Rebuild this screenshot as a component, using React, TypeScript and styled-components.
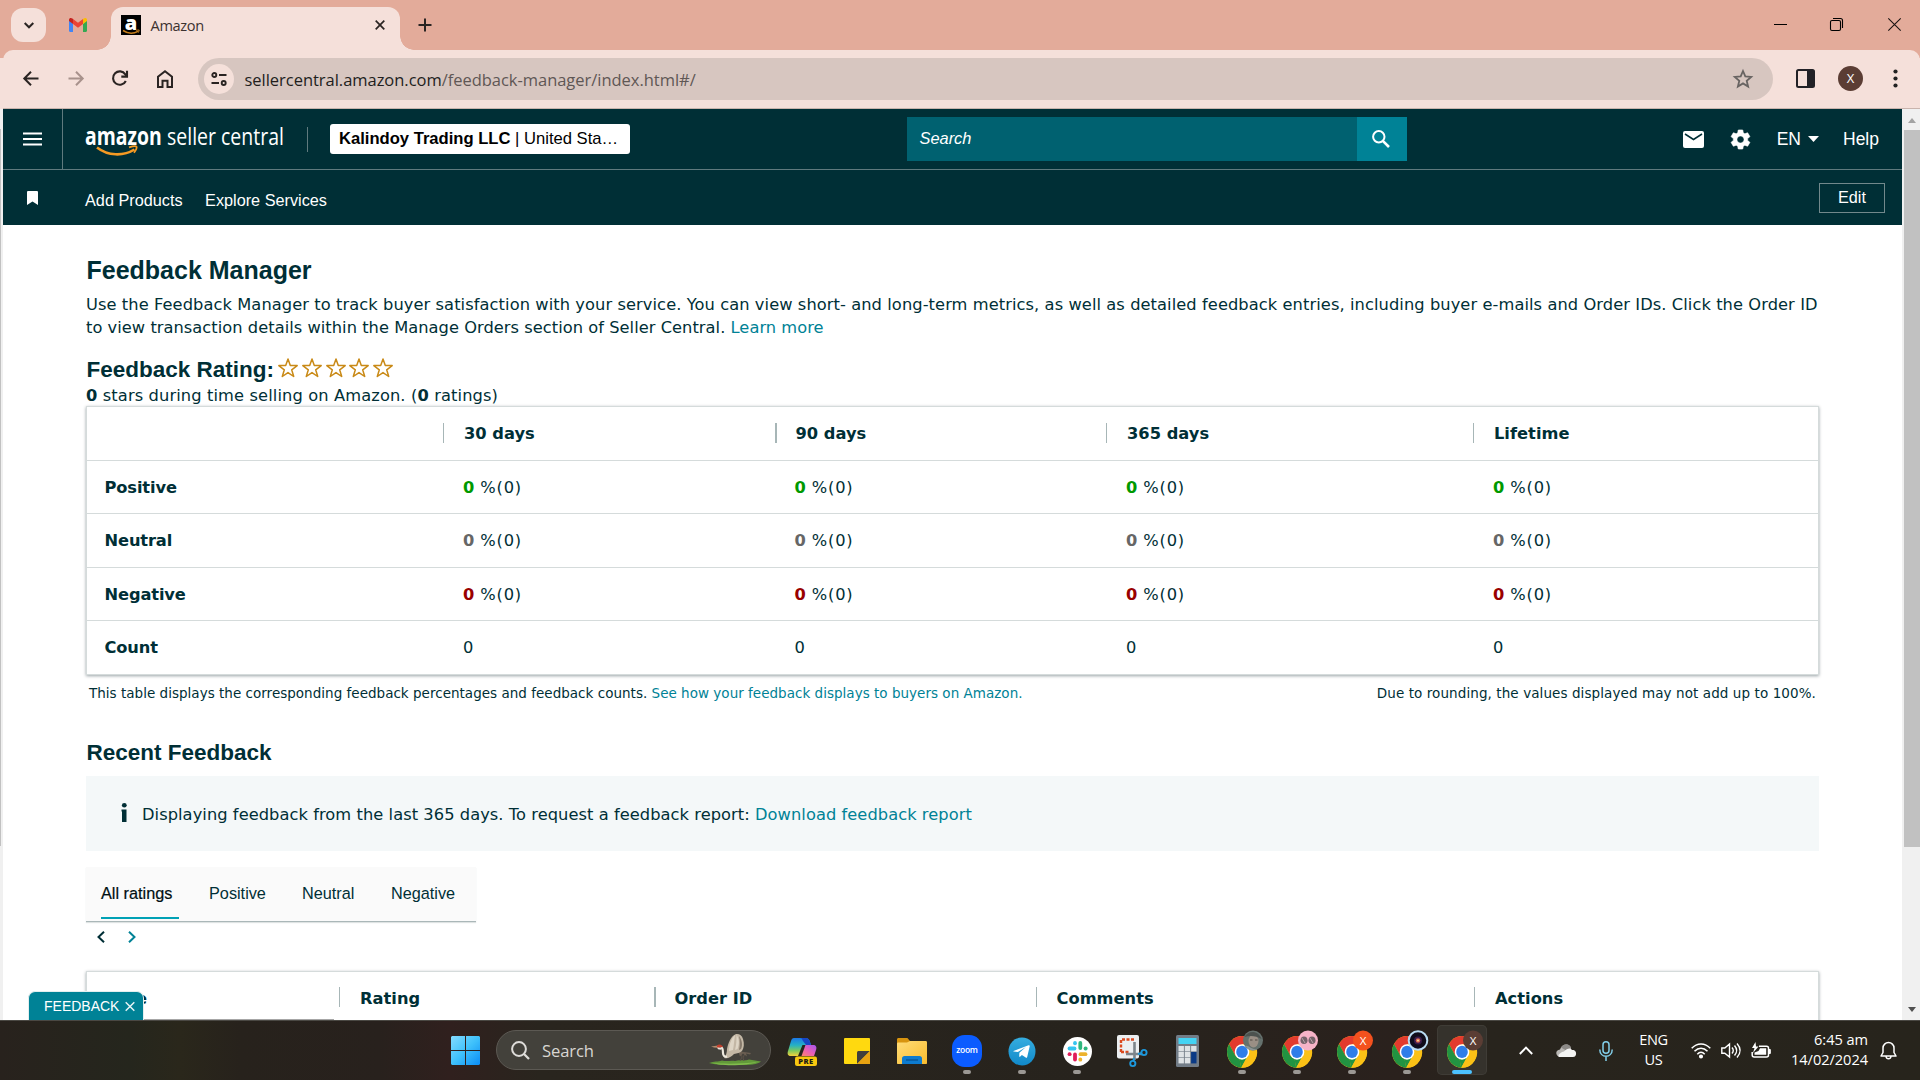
import React from "react";
import styled, { createGlobalStyle, css } from "styled-components";

const ui = '"Open Sans", "Noto Sans", sans-serif';
const arial = '"Liberation Sans", Arial, sans-serif';
const verdana = '"DejaVu Sans", Verdana, sans-serif';
const ink = "#002f36";
const teal = "#008296";

const GlobalStyle = createGlobalStyle`
  *, *::before, *::after { box-sizing: border-box; }
  html, body { margin: 0; padding: 0; overflow: hidden; }
  body { background: #fff; color: ${ink}; font-family: ${verdana}; }
  svg { display: block; flex: none; overflow: visible; }
`;

const Screen = styled.div`
  display: grid;
  grid-template-rows: 50px 59px 911px 60px;
  width: 1920px;
  height: 1080px;
  overflow: hidden;
`;

/* ---------- Browser tab strip ---------- */
const TabStrip = styled.header`
  display: flex;
  align-items: flex-start;
  background: #e3ab9a;
`;
const TabSearchButton = styled.div`
  display: flex;
  align-items: center;
  justify-content: center;
  width: 35px;
  height: 34px;
  margin: 8px 0 0 11px;
  border-radius: 12px;
  background: #f5e0da;
`;
const PinnedTab = styled.div`
  display: flex;
  align-items: center;
  height: 50px;
  margin: 0 0 0 23px;
`;
const ActiveTab = styled.div`
  position: relative;
  display: flex;
  align-items: center;
  width: 289px;
  height: 43px;
  margin: 7px 0 0 24px;
  padding: 0 14px 7px 10px;
  border-radius: 12px 12px 0 0;
  background: #f5e0da;
  &::before, &::after {
    content: "";
    position: absolute;
    bottom: 0;
    width: 14px;
    height: 14px;
  }
  &::before { left: -14px; background: radial-gradient(circle at 0 0, transparent 13.5px, #f5e0da 14px); }
  &::after { right: -14px; background: radial-gradient(circle at 100% 0, transparent 13.5px, #f5e0da 14px); }
`;
const TabTitle = styled.span`
  flex: 1;
  margin-left: 9.5px;
  font: 14.6px/20px ${ui};
  letter-spacing: -0.35px;
  color: #3c3230;
`;
const NewTab = styled.div`
  display: flex;
  align-items: center;
  height: 50px;
  margin-left: 18px;
`;
const WindowControls = styled.div`
  display: flex;
  align-items: center;
  gap: 44px;
  height: 49px;
  margin-left: auto;
  padding-right: 19px;
`;

/* ---------- Browser toolbar ---------- */
const Toolbar = styled.div`
  display: flex;
  align-items: center;
  height: 59px;
  margin-left: 3px;
  padding: 0 19px 1px 20px;
  border-bottom: 1px solid #c9b4ad;
  background: #f5e0da;
  border-radius: 10px 10px 0 0;
`;
const ToolbarBacking = styled.div`
  background: linear-gradient(#e3ab9a 8px, #f5e0da 8px);
`;
const NavIcons = styled.div`
  display: flex;
  align-items: center;
  gap: 28.7px;
  width: 175px;
`;
const Omnibox = styled.div`
  display: flex;
  align-items: center;
  width: 1575px;
  height: 42px;
  padding: 0 20px 0 6px;
  border-radius: 21px;
  background: #d7c6c0;
`;
const SiteInfo = styled.div`
  display: flex;
  align-items: center;
  justify-content: center;
  width: 30px;
  height: 30px;
  border-radius: 50%;
  background: #f5e0da;
`;
const Url = styled.span`
  flex: 1;
  margin: 2px 0 0 10.5px;
  font: 16.5px/24px ${ui};
  letter-spacing: -0.03px;
  color: #5f5755;
  b { font-weight: 400; color: #221e1d; }
`;
const Profile = styled.div`
  display: flex;
  align-items: center;
  justify-content: center;
  width: 25px;
  height: 25px;
  margin: 0 30px 0 23px;
  border-radius: 50%;
  background: #5b3d34;
  color: #fff;
  font: 13px/25px ${ui};
`;

/* ---------- Page viewport ---------- */
const Viewport = styled.div`
  display: grid;
  grid-template-columns: 3px 1899px 18px;
  height: 911px;
`;
const LeftEdge = styled.div`
  background: #f0f0f0;
  &::before {
    content: "";
    display: block;
    width: 1px;
    height: 717px;
    margin-top: 20px;
    background: #c1c1c1;
  }
`;
const Page = styled.div`
  position: relative;
  height: 911px;
  overflow: hidden;
  background: #fff;
`;
const Scrollbar = styled.div`
  display: flex;
  flex-direction: column;
  justify-content: space-between;
  height: 911px;
  padding-left: 2px;
  background: #f0f0f0;
`;
const ScrollArrow = styled.div<{ $down?: boolean }>`
  width: 0;
  height: 0;
  margin: ${(p) => (p.$down ? "auto 0 8px 4px" : "9px 0 7px 4px")};
  border: 4.5px solid transparent;
  ${(p) => (p.$down ? css`border-top: 5px solid #505050; border-bottom: 0;` : css`border-bottom: 5px solid #a3a3a3; border-top: 0;`)}
`;
const ScrollThumb = styled.div`
  height: 717px;
  background: #c1c1c1;
`;

/* ---------- Seller Central header ---------- */
const SiteHeader = styled.div`
  display: flex;
  align-items: center;
  height: 61px;
  border-bottom: 1px solid #5f7a7e;
  background: ${ink};
`;
const MenuButton = styled.div`
  display: flex;
  align-items: center;
  width: 60px;
  height: 60px;
  padding-left: 20px;
  border-right: 1px solid #5f7a7e;
`;
const Logo = styled.div`
  position: relative;
  display: flex;
  width: 221px;
  height: 36px;
  margin-left: 22px;
  color: #fff;
  white-space: nowrap;
  svg { position: absolute; left: 12px; top: 25px; }
`;
const Wordmark = styled.span<{ $bold?: boolean }>`
  width: ${(p) => (p.$bold ? 82 : 120)}px;
  font: ${(p) => (p.$bold ? "700 25px" : "400 24px")}/29px ${ui};
  transform: scaleX(${(p) => (p.$bold ? 0.775 : 0.812)});
  transform-origin: 0 50%;
`;
const HeaderRule = styled.div`
  width: 1px;
  height: 25px;
  margin-left: 1px;
  background: #5f7a7e;
`;
const AccountBox = styled.div`
  width: 300px;
  height: 30px;
  margin: 0 0 1px 22px;
  padding-left: 9px;
  border-radius: 3px;
  background: #fff;
  color: #000;
  font: 16.6px/29px ${arial};
  white-space: nowrap;
`;
const SearchBox = styled.div`
  display: flex;
  width: 500px;
  height: 44px;
  margin-left: 277px;
`;
const SearchInput = styled.div`
  flex: 1;
  padding-left: 12.5px;
  background: #006170;
  color: #fff;
  font: italic 16.4px/43px ${arial};
`;
const SearchButton = styled.div`
  display: flex;
  align-items: center;
  justify-content: center;
  width: 50px;
  padding-right: 2px;
  background: ${teal};
`;
const HeaderTools = styled.div`
  display: flex;
  align-items: center;
  margin-left: auto;
  padding-right: 23px;
  color: #fff;
  font: 17.5px/20px ${arial};
`;
const Language = styled.span`
  display: flex;
  align-items: center;
  gap: 7px;
  margin: 0 24px 0 25px;
`;
const SubNav = styled.div`
  display: flex;
  align-items: center;
  height: 55px;
  padding: 0 17px 0 24px;
  background: ${ink};
  color: #fff;
  font: 16.25px/20px ${arial};
`;
const SubNavLinks = styled.div`
  display: flex;
  gap: 22.5px;
  margin: 5px auto 0 47px;
`;
const EditButton = styled.div`
  width: 66px;
  height: 30px;
  margin-top: 1px;
  border: 1px solid #72898c;
  text-align: center;
  line-height: 27px;
`;

/* ---------- Page content ---------- */
const Content = styled.main`
  width: 1733px;
  margin-left: 83px;
  padding-top: 30px;
  font: 16.25px/23px ${verdana};
`;
const Title = styled.h1`
  margin: 0 0 8px 0.5px;
  font: bold 25px/30px ${arial};
`;
const Intro = styled.p`
  margin: 0 0 16px;
  letter-spacing: 0.08px;
  white-space: nowrap;
`;
const IntroTail = styled.span`letter-spacing: 0.04px;`;
const Link = styled.a`color: ${teal};`;
const SectionTitle = styled.h2`
  display: flex;
  margin: 0 0 0 0.5px;
  font: bold 22.5px/30px ${arial};
`;
const Stars = styled.span`
  display: flex;
  gap: 3.8px;
  margin: 3px 0 0 4px;
`;
const Summary = styled.div`
  height: 21px;
  line-height: 22px;
  letter-spacing: 0.12px;
`;
const Table = styled.div`
  border: 1px solid #d5dbdb;
  background: #fff;
  box-shadow: 0 1px 3px rgba(0, 28, 36, 0.4);
`;
const TableRow = styled.div<{ $height: number; $columns: string }>`
  display: grid;
  grid-template-columns: ${(p) => p.$columns};
  height: ${(p) => p.$height}px;
  line-height: ${(p) => p.$height}px;
  border-bottom: 1px solid #d5dbdb;
  &:last-child { border-bottom: 0; }
`;
const HeadCell = styled.div<{ $indent?: number; $thick?: boolean }>`
  display: flex;
  align-items: center;
  padding-left: ${(p) => p.$indent ?? 0}px;
  font-weight: 700;
  letter-spacing: 0.02px;
  ${(p) => p.$indent === undefined && css`
    &::before {
      content: "";
      width: ${p.$thick ? 2 : 1}px;
      height: 20px;
      margin-right: ${p.$thick ? 19 : 20}px;
      margin-bottom: 3px;
      background: #a7b6b7;
    }
  `}
`;
const LabelCell = styled.div`
  padding-left: 17.5px;
  font-weight: 700;
  letter-spacing: -0.12px;
`;
const ValueCell = styled.div`
  padding-left: 20px;
  letter-spacing: 0.8px;
`;
const Percent = styled.b<{ $color: string }>`
  color: ${(p) => p.$color};
  letter-spacing: 0;
`;
const Notes = styled.div`
  display: flex;
  justify-content: space-between;
  margin: 8px 2px 35px 3px;
  padding-right: 1px;
  font-size: 13.5px;
  line-height: 20px;
  letter-spacing: 0.02px;
  > span:last-child { letter-spacing: 0.09px; }
`;
const Alert = styled.div`
  display: flex;
  align-items: center;
  height: 75px;
  margin: 8px 0 16px;
  padding: 1px 0 0 34.5px;
  background: #f4f8f9;
  letter-spacing: 0.06px;
  svg { margin-right: 15.5px; margin-bottom: 4px; }
`;
const Tabs = styled.div`
  display: flex;
  width: 390px;
  height: 55px;
  padding-left: 15px;
  border-bottom: 1px solid #aab7b8;
  background: #fafafa;
  box-shadow: 0 1px 1px #dfe3e3;
  font: 16.25px/53px ${arial};
`;
const Tab = styled.div<{ $active?: boolean; $width: number }>`
  width: ${(p) => p.$width}px;
  height: 52px;
  ${(p) => p.$active && css`color: #000f12; border-bottom: 2px solid #00a1b5; -webkit-text-stroke: 0.2px #000f12;`}
`;
const Pager = styled.div`
  display: flex;
  align-items: center;
  gap: 23px;
  height: 30px;
  margin-bottom: 19px;
  padding-left: 11px;
`;
const FeedbackTab = styled.div`
  position: absolute;
  left: 25px;
  bottom: 0;
  display: flex;
  align-items: center;
  width: 116px;
  height: 29px;
  padding: 0 8px 0 15px;
  border: 1px solid #e4eeee;
  border-bottom: 0;
  border-radius: 7px 7px 0 0;
  background: ${teal};
  color: #fff;
  font: 14px/28px ${arial};
  justify-content: space-between;
`;
const StatusEdge = styled.div`
  position: absolute;
  left: 49px;
  bottom: 0;
  width: 282px;
  height: 1px;
  background: #a6a6a6;
`;

/* ---------- Taskbar ---------- */
const Taskbar = styled.footer`
  display: flex;
  height: 60px;
  border-top: 1px solid #4a4843;
  background: linear-gradient(90deg, #28221d 0, #25261d 130px, #2a271b 180px, #27221c 240px, #28211d 380px, #30201e 450px, #29251e 540px, #27231d 1100px, #2a211d 1400px, #28241d 1480px, #27241c 100%);
  color: #fff;
`;
const StartButton = styled.div`margin: 15px 16px 0 451px;`;
const TaskSearch = styled.div`
  display: flex;
  align-items: center;
  width: 275px;
  height: 40px;
  margin: 9px 3.5px 0 0;
  padding: 0 9px 0 14px;
  border: 1px solid #5c5953;
  border-radius: 20px;
  background: #43413b;
  color: #d8d6d2;
  font: 16.6px/24px ${ui};
  letter-spacing: -0.1px;
  span { flex: 1; margin: 1px 0 0 12px; }
`;
const Slot = styled.div<{ $active?: boolean }>`
  display: flex;
  flex-direction: column;
  align-items: center;
  width: 50px;
  height: 50px;
  margin: 4px 2.5px 0;
  padding-top: 10px;
  border-radius: 5px;
  ${(p) => p.$active && css`background: #35322c; box-shadow: inset 0 0 0 1px #3f3c36;`}
`;
const Indicator = styled.i<{ $active?: boolean }>`
  width: ${(p) => (p.$active ? 20 : 8)}px;
  height: 4px;
  margin-top: 4px;
  border-radius: 2px;
  background: ${(p) => (p.$active ? "#4cc2ff" : "#9b9894")};
`;
const Tray = styled.div`
  display: flex;
  align-items: center;
  margin-left: auto;
  padding-right: 23px;
`;
const TrayText = styled.div<{ $align: string; $width: number; $ls: number }>`
  width: ${(p) => p.$width}px;
  margin-bottom: 3px;
  text-align: ${(p) => p.$align};
  font: 14.6px/20px ${ui};
  letter-spacing: ${(p) => p.$ls}px;
  white-space: nowrap;
`;
const Gap = styled.i<{ $width: number }>`width: ${(p) => p.$width}px;`;

/* ---------- Data ---------- */
const ratingColumns = "356px 331.500px 331.500px 367px 1fr";
const feedbackColumns = "252px 314.500px 382px 438.500px 1fr";
const periods = ["30 days", "90 days", "365 days", "Lifetime"];
const ratings = [
  { label: "Positive", color: "#009900", height: 53 },
  { label: "Neutral", color: "#666666", height: 54 },
  { label: "Negative", color: "#990000", height: 53 },
];

/* ---------- Icons ---------- */
const GmailIcon = () => (
  <svg width="18" height="14" viewBox="0 0 18 14">
    <path d="M0 2v10.800c0 .7.5 1.200 1.200 1.200H4V6z" fill="#4285f4" />
    <path d="M14 6v8h2.800c.7 0 1.200-.5 1.200-1.200V2z" fill="#34a853" />
    <path d="M14 1.200V6l4-3V1.800C18 0 16-.6 14.600.5z" fill="#fbbc04" />
    <path d="M4 6V1l5 3.800L14 1v5L9 9.800z" fill="#ea4335" />
    <path d="M0 1.800V3l4 3V1.100L3.400.5C2-.6 0 0 0 1.800z" fill="#c5221f" />
  </svg>
);

const AmazonFavicon = () => (
  <svg width="20" height="20" viewBox="0 0 20 20">
    <rect width="20" height="20" fill="#000" />
    <text x="10" y="14.500" textAnchor="middle" fontFamily="Open Sans" fontWeight="800" fontSize="20" fill="#fff">a</text>
    <path d="M2 15.500c5 3.300 10.500 3.300 15 .8" stroke="#c77f1c" strokeWidth="1.500" fill="none" />
    <path d="M15 15.200l3.200-.2-.7 2.600" stroke="#c77f1c" strokeWidth="1" fill="none" />
  </svg>
);

const StarIcon = () => (
  <svg width="20" height="20" viewBox="0 0 20 20">
    <path d="M10 1l2.300 6.400 6.900.2-5.500 4.200 2 6.700L10 14.600l-5.700 3.900 2-6.700L.8 7.600l6.900-.2z" fill="#fff" stroke="#c98a17" strokeWidth="1.500" strokeLinejoin="round" />
  </svg>
);

const GearIcon = () => (
  <svg width="23" height="23" viewBox="0 0 24 24" fill="#fff">
    <path d="M19.430 12.980c.04-.32.07-.64.07-.98s-.03-.66-.07-.98l2.110-1.650c.19-.15.24-.42.120-.64l-2-3.460c-.12-.22-.39-.3-.61-.22l-2.490 1c-.52-.4-1.080-.73-1.690-.98l-.38-2.650A.488.488 0 0 0 14 2h-4c-.25 0-.46.180-.49.420l-.38 2.650c-.61.250-1.170.590-1.690.980l-2.490-1c-.23-.09-.49 0-.61.220l-2 3.460c-.13.220-.07.490.120.640l2.110 1.650c-.04.320-.07.650-.07.980s.03.660.07.980l-2.110 1.650c-.19.150-.24.420-.12.640l2 3.460c.12.220.39.300.61.220l2.490-1c.52.400 1.080.730 1.690.980l.38 2.650c.03.240.24.420.49.420h4c.25 0 .46-.18.49-.42l.38-2.650c.61-.25 1.170-.59 1.690-.98l2.490 1c.23.090.49 0 .61-.22l2-3.460c.12-.22.07-.49-.12-.64l-2.110-1.650zM12 15.700c-2.040 0-3.700-1.660-3.700-3.700s1.660-3.700 3.700-3.700 3.700 1.660 3.700 3.700-1.660 3.700-3.700 3.700z" stroke="#fff" strokeWidth=".6" />
  </svg>
);

const WindowsIcon = () => (
  <svg width="29" height="29" viewBox="0 0 29 29">
    <defs>
      <linearGradient id="win" x1="0" y1="0" x2="1" y2="1" gradientUnits="objectBoundingBox">
        <stop offset="0" stopColor="#84dcff" /><stop offset=".5" stopColor="#3fc1fb" /><stop offset="1" stopColor="#0a8cf5" />
      </linearGradient>
    </defs>
    <path d="M1 0h13v14H0V1zM15 0h13l1 1v13H15zM0 15h14v14H1l-1-1zM15 15h14v13l-1 1H15z" fill="url(#win)" />
  </svg>
);

const CraneArt = () => (
  <svg width="52" height="32" viewBox="0 0 52 32">
    <path d="M0 29c5-2 9-1 13-2.500 5 1.500 8-.5 13 .5 6-1.500 10 0 14-1.500 4 1 8 1 12 2-3 3-12 3.500-22 3.500C17 31 8 31 0 29z" fill="#62993a" />
    <path d="M4 29c10 1 30 1 44-1-6 3-34 5-44 1z" fill="#82bd4d" />
    <path d="M32 19l1 4-2 4M36 19l-2 5 1 3" stroke="#5d5247" strokeWidth="1" fill="none" />
    <path d="M28 17l14 2-1 1.500-4-1 1 3-4-3-3 3-1-3z" fill="#6a5e51" />
    <path d="M15 24c2-2 3-6 3-9 1-6 4-13 9-15 3-.5 6 1 7 5 1.500 5 1 9-1 12-2 2-5 2-8 3-3 3-6 5-10 4z" fill="#c3b7a5" />
    <path d="M20 17c0-6 2-12 6-16-1 6-1 10-2 15zM26 16c1.500-6 1.500-10 1.500-15 3 4 3 9 1 14z" fill="#ded5c5" />
    <path d="M30 16c1-5 1-9 0-14 3 4 4 9 2 13z" fill="#867a6c" />
    <path d="M12 13c2 1 2 4 2 6 0 3 2 4 4 3.500" stroke="#eee9df" strokeWidth="2.200" fill="none" />
    <path d="M2 12.500l7-1 1 2.500-5-.5z" fill="#b28b6d" />
    <path d="M8 11.500c2-2 5-1 6 1.500l-6 1z" fill="#c5402d" />
    <path d="M8 13.500l5 .2-1 2-3-.5z" fill="#e9e3da" />
  </svg>
);

const CopilotIcon = () => (
  <svg width="30" height="30" viewBox="0 0 30 30">
    <defs>
      <linearGradient id="cpa" x1="0" y1="0" x2="0" y2="1"><stop offset="0" stopColor="#1c78e8" /><stop offset=".4" stopColor="#25b1c4" /><stop offset=".7" stopColor="#7bc95f" /><stop offset="1" stopColor="#f4d13a" /></linearGradient>
      <linearGradient id="cpb" x1="1" y1="0" x2="0" y2="1"><stop offset="0" stopColor="#a455f0" /><stop offset=".5" stopColor="#ea5fb5" /><stop offset="1" stopColor="#ff8a62" /></linearGradient>
    </defs>
    <path d="M7 2h12c2 0 3 1 4 4l1 3h-5c-2 0-3 1-4 3l-3 8H4c-3 0-4-2-3-5L4 5c.600-2 1.500-3 3-3z" fill="url(#cpa)" />
    <path d="M13 2h6c2 0 3 1 4 4l1 3h-5l-3-4c-1-2-1-3-3-3z" fill="#1746c4" />
    <path d="M19 9h7c3 0 4 2 3 5l-2 6H12l4-9c.600-1.400 1.500-2 3-2z" fill="url(#cpb)" />
    <path d="M15.500 9h3l-4 11h-3.500z" fill="#26251f" />
    <rect x="8" y="20.500" width="22" height="9.500" rx="2" fill="#f8c810" />
    <text x="19" y="28" textAnchor="middle" fontFamily="Open Sans" fontWeight="800" fontSize="7.500" letterSpacing=".5" fill="#1b1a16">PRE</text>
  </svg>
);

const StickyNoteIcon = () => (
  <svg width="26" height="30" viewBox="0 0 26 30">
    <rect y="2" width="26" height="26" rx="1" fill="#ffd90f" />
    <path d="M13 17c0-1.500.500-2 2-2h11L13 28z" fill="#413f3c" />
    <path d="M26 15v12a1 1 0 0 1-1 1H13z" fill="#e8a311" />
  </svg>
);

const FolderIcon = () => (
  <svg width="30" height="30" viewBox="0 0 30 30">
    <defs><linearGradient id="fld" x1="0" y1="0" x2="1" y2="1"><stop offset="0" stopColor="#ffdc78" /><stop offset="1" stopColor="#f9bc2e" /></linearGradient></defs>
    <path d="M0 3.500C0 2.500.700 2 1.500 2h8c1 0 1.500.500 2 1.200L13 5v5H0z" fill="#d8940f" />
    <path d="M0 8c0-1.300.500-1.600 1.500-1.600H10L13 5h15.500c1 0 1.500.500 1.500 1.500V27c0 .700-.400 1-1 1H1c-.600 0-1-.300-1-1z" fill="url(#fld)" />
    <path d="M5 28v-5.500c0-1.500 1-2.500 2.500-2.500h15c1.500 0 2.500 1 2.500 2.500V28z" fill="#0d7bcf" />
    <path d="M9 24h12" stroke="#06508d" strokeWidth="1.200" />
  </svg>
);

const ZoomIcon = () => (
  <svg width="30" height="32" viewBox="0 0 30 32">
    <rect width="30" height="32" rx="12.500" fill="#0b5cff" />
    <text x="15" y="18.300" textAnchor="middle" fontFamily="Open Sans" fontWeight="600" fontSize="8.500" letterSpacing="-.3" fill="#fff">zoom</text>
  </svg>
);

const TelegramIcon = () => (
  <svg width="28" height="30" viewBox="0 0 28 30">
    <defs><linearGradient id="tg" x1="0" y1="0" x2="0" y2="1"><stop offset="0" stopColor="#35ade0" /><stop offset="1" stopColor="#1189c9" /></linearGradient></defs>
    <ellipse cx="14" cy="15.500" rx="13.500" ry="14" fill="url(#tg)" />
    <path d="M5.500 15L20.600 9.300c.8-.3 1.300.2 1.100 1L19.200 21c-.2.900-.800 1-1.500.600l-3.800-2.700-1.900 1.800c-.3.300-.800.200-.800-.300l.200-3.700 6.500-5.700-8 5-4.300-.500c-.600-.200-.600-.300-.1-.5z" fill="#fff" />
  </svg>
);

const SlackIcon = () => (
  <svg width="29" height="30" viewBox="0 0 29 30">
    <ellipse cx="14.500" cy="15.500" rx="14.500" ry="14.500" fill="#fff" />
    <g strokeWidth="3.800" strokeLinecap="round" fill="none">
      <path d="M6.500 12.500h5" stroke="#36c5f0" /><path d="M12 7v.3" stroke="#36c5f0" />
      <path d="M17.300 7v5" stroke="#2eb67d" /><path d="M22.500 12.500h.2" stroke="#2eb67d" />
      <path d="M17.500 18.200h5" stroke="#ecb22e" /><path d="M17.300 23.500v.2" stroke="#ecb22e" />
      <path d="M12 18.500v5" stroke="#e01e5a" /><path d="M6.500 18.200h.2" stroke="#e01e5a" />
    </g>
  </svg>
);

const SnipIcon = () => (
  <svg width="30" height="32" viewBox="0 0 30 32">
    <rect width="22" height="23.500" rx="2" fill="#eceff1" />
    <path d="M4 17V4.500h13" fill="none" stroke="#dc4a1f" strokeWidth="2.400" strokeDasharray="3 1.500" />
    <path d="M4 17h9" stroke="#dc4a1f" strokeWidth="2.400" strokeDasharray="3 1.500" />
    <path d="M17.500 7v18M9 19h16" stroke="#7d858b" strokeWidth="2.600" />
    <circle cx="27" cy="17.500" r="2.600" fill="none" stroke="#1d98dc" strokeWidth="1.900" />
    <circle cx="15.800" cy="28.500" r="2.600" fill="none" stroke="#1d98dc" strokeWidth="1.900" />
    <path d="M21 19l4-1M17 23l-.5 3" stroke="#1d98dc" strokeWidth="2" />
  </svg>
);

const CalculatorIcon = () => (
  <svg width="23" height="32" viewBox="0 0 23 32">
    <rect width="23" height="32" rx="1.500" fill="#727c87" />
    <rect x="2.500" y="3" width="18" height="6" fill="#44d3f4" />
    <g fill="#dfe3e6">
      {[11, 17, 23].map((y) => [2.5, 8.8].map((x) => <rect key={`${x}-${y}`} x={x} y={y} width="5.400" height="5.400" />))}
      <rect x="15.100" y="11" width="5.400" height="5.400" />
    </g>
    <rect x="15.100" y="17" width="5.400" height="11.400" fill="#0b3a85" />
  </svg>
);

const badges = {
  photo: <><circle cx="26" cy="4.500" r="10" fill="#65716d" /><ellipse cx="26.500" cy="5" rx="5" ry="6.500" fill="#9a8f85" /><path d="M17.500 1c4-7 14-7 17 2-5-3-11-4-17-2z" fill="#4c524f" /><path d="M23 4h2.500M28 4h2.500" stroke="#514a45" /><path d="M18 10c4-1 6 4 12 3-4 3-9 1-12-3z" fill="#8c9594" /></>,
  pink: <><circle cx="26" cy="4.500" r="10" fill="#f6b3c8" /><ellipse cx="22" cy="4.300" rx="3.500" ry="3.800" fill="#75626a" /><ellipse cx="30" cy="4.300" rx="3.500" ry="3.800" fill="#75626a" /><path d="M20 2l3 5M28 2l3 5" stroke="#b8a2a8" /></>,
  orange: <><circle cx="26" cy="4.500" r="10" fill="#f4511e" /><text x="26" y="8.700" textAnchor="middle" fontFamily="Open Sans" fontSize="11.500" fill="#fff">X</text></>,
  lens: <><circle cx="26" cy="4.500" r="9.300" fill="#100d1c" stroke="#b9dcf3" strokeWidth="2" /><circle cx="26" cy="4.500" r="4" fill="#3b1d4d" /><circle cx="26" cy="4.500" r="2.300" fill="#d7654d" /><circle cx="26" cy="4.500" r="1" fill="#f6dd9b" /></>,
  brown: <><circle cx="26" cy="4.500" r="10" fill="#5b3d34" /><text x="26" y="8.700" textAnchor="middle" fontFamily="Open Sans" fontSize="11.500" fill="#fff">X</text></>,
};

const ChromeIcon = ({ badge }: { badge: keyof typeof badges }) => (
  <svg width="30" height="30" viewBox="0 0 30 30">
    <g transform="scale(1 1.060)">
      <circle cx="15" cy="15" r="15" fill="#fbc116" />
      <path d="M15 15L2 7.500A15 15 0 0 1 28 7.500H15z" fill="#e33b2e" />
      <path d="M2 7.500l6.500 11.300L15 15V7.500z" fill="#e33b2e" />
      <path d="M2 7.500l6.500 11.300 4 2.500 1.700 8.700A15 15 0 0 1 2 7.500z" fill="#229342" />
      <path d="M12 20l9-2-6.800 12z" fill="#229342" />
      <path d="M14.200 30l7.300-12L15 8h13.300A15 15 0 0 1 14.200 30z" fill="#fbc116" />
      <circle cx="15" cy="15" r="7.300" fill="#fff" />
      <circle cx="15" cy="15" r="5.800" fill="#2f7de9" />
    </g>
    {badges[badge]}
  </svg>
);

const taskApps: { icon: React.ReactNode; running?: boolean; active?: boolean }[] = [
  { icon: <CopilotIcon /> },
  { icon: <StickyNoteIcon /> },
  { icon: <FolderIcon /> },
  { icon: <ZoomIcon />, running: true },
  { icon: <TelegramIcon />, running: true },
  { icon: <SlackIcon />, running: true },
  { icon: <SnipIcon /> },
  { icon: <CalculatorIcon /> },
  { icon: <ChromeIcon badge="photo" />, running: true },
  { icon: <ChromeIcon badge="pink" />, running: true },
  { icon: <ChromeIcon badge="orange" />, running: true },
  { icon: <ChromeIcon badge="lens" />, running: true },
  { icon: <ChromeIcon badge="brown" />, running: true, active: true },
];
const IconBox = styled.div`
  display: flex;
  align-items: center;
  height: 31px;
`;

/* ---------- Sections ---------- */
const Stroke = ({ w, h, d, c = "#2a2422", s = 2 }: { w: number; h: number; d: string; c?: string; s?: number }) => (
  <svg width={w} height={h} viewBox={`0 0 ${w} ${h}`}><path d={d} fill="none" stroke={c} strokeWidth={s} /></svg>
);

const BrowserTabs = () => (
  <TabStrip>
    <TabSearchButton><Stroke w={10} h={7} d="M.7 1L5 5.300 9.300 1" /></TabSearchButton>
    <PinnedTab><GmailIcon /></PinnedTab>
    <ActiveTab>
      <AmazonFavicon />
      <TabTitle>Amazon</TabTitle>
      <Stroke w={11} h={10} d="M.7.7l8.600 8.600M9.300.7L.7 9.300" s={1.700} />
    </ActiveTab>
    <NewTab><Stroke w={14} h={14} d="M7 .5v13M.5 7h13" /></NewTab>
    <WindowControls>
      <Stroke w={13} h={13} d="M0 6.500h13" c="#000" s={1} />
      <svg width="13" height="13" viewBox="0 0 13 13" fill="none" stroke="#000" strokeWidth="1.100">
        <rect x="-.5" y="2.500" width="10" height="10" rx="1.500" /><path d="M2 .5h7.500a2 2 0 0 1 2 2V10" />
      </svg>
      <Stroke w={13} h={13} d="M.3.3l12.400 12.400M12.700.3L.3 12.700" c="#1a1312" s={1.100} />
    </WindowControls>
  </TabStrip>
);

const BrowserToolbar = () => (
  <ToolbarBacking>
    <Toolbar>
      <NavIcons>
        <Stroke w={16} h={15} d="M15.500 7.500H1.500M8 .8L1.300 7.500 8 14.200" />
        <Stroke w={16} h={15} d="M.5 7.500h14M8 .8l6.700 6.700L8 14.200" c="#a8928c" />
        <svg width="17" height="17" viewBox="0 0 17 17" fill="none" stroke="#2a2422" strokeWidth="2.100">
          <path d="M13.800 11A6.700 6.700 0 1 1 13.300 4.300L14.500 6" /><path d="M15 .8v5.800H9.300" />
        </svg>
        <Stroke w={16} h={18} d="M0 17V6.800L7 1.300l7 5.500V17H9.500v-6.200h-5V17z" />
      </NavIcons>
      <Omnibox>
        <SiteInfo>
          <svg width="16" height="14" viewBox="0 0 16 14" fill="none" stroke="#2a2422" strokeWidth="1.900">
            <circle cx="3.300" cy="3" r="2" /><path d="M8 3h7.500M.5 11H8" /><circle cx="12.700" cy="11" r="2" />
          </svg>
        </SiteInfo>
        <Url><b>sellercentral.amazon.com</b>/feedback-manager/index.html#/</Url>
        <svg width="20" height="19" viewBox="0 0 20 19"><path d="M10 2l2.300 5.400 5.900.5-4.500 3.900 1.400 5.700L10 14.400l-5.100 3.100 1.400-5.700L1.800 7.900l5.900-.5z" fill="none" stroke="#686462" strokeWidth="1.800" /></svg>
      </Omnibox>
      <Gap $width={23} />
      <svg width="19" height="19" viewBox="0 0 19 19"><rect x="1" y="1" width="17" height="17" rx="1.500" fill="none" stroke="#222126" strokeWidth="2" /><path d="M11 1h7v17h-7z" fill="#222126" /></svg>
      <Profile>X</Profile>
      <svg width="5" height="19" viewBox="0 0 5 19" fill="#222"><circle cx="2.500" cy="2.500" r="2.100" /><circle cx="2.500" cy="9.500" r="2.100" /><circle cx="2.500" cy="16.500" r="2.100" /></svg>
    </Toolbar>
  </ToolbarBacking>
);

const SellerHeader = () => (
  <>
    <SiteHeader>
      <MenuButton><Stroke w={19} h={14} d="M0 1.500h19M0 7h19M0 12.500h19" c="#fff" s={1.800} /></MenuButton>
      <Logo>
        <Wordmark $bold>amazon</Wordmark>
        <Wordmark>seller central</Wordmark>
        <svg width="41" height="12" viewBox="0 0 41 12" fill="none" stroke="#f59a23">
          <path d="M0 1.500c11 8.500 26 9 37.500 2" strokeWidth="2.600" /><path d="M32 1.300c4-1.200 7-1.400 7.500-.6.400 1-.500 3.500-2.500 6" strokeWidth="1.800" />
        </svg>
      </Logo>
      <HeaderRule />
      <AccountBox><b>Kalindoy Trading LLC</b> | United Sta…</AccountBox>
      <SearchBox>
        <SearchInput>Search</SearchInput>
        <SearchButton>
          <svg width="18" height="18" viewBox="0 0 18 18" fill="none" stroke="#fff"><circle cx="6.800" cy="6.800" r="5.700" strokeWidth="2" /><path d="M10.800 10.800l6.200 6.200" strokeWidth="2.600" /></svg>
        </SearchButton>
      </SearchBox>
      <HeaderTools>
        <svg width="21" height="17" viewBox="0 0 21 17"><rect width="21" height="17" rx="2" fill="#fff" /><path d="M2 3l8.500 5.500L19 3" fill="none" stroke={ink} strokeWidth="1.500" /></svg>
        <Gap $width={25} />
        <GearIcon />
        <Language>EN<svg width="11" height="6" viewBox="0 0 11 6"><path d="M0 0h11L5.500 6z" fill="#fff" /></svg></Language>
        Help
      </HeaderTools>
    </SiteHeader>
    <SubNav>
      <svg width="11" height="14" viewBox="0 0 11 14"><path d="M1.200 0h8.600c.7 0 1.200.5 1.200 1.200V14l-5.500-3.600L0 14V1.200C0 .5.500 0 1.200 0z" fill="#fff" /></svg>
      <SubNavLinks><span>Add Products</span><span>Explore Services</span></SubNavLinks>
      <EditButton>Edit</EditButton>
    </SubNav>
  </>
);

const FeedbackPage = () => (
  <Content>
    <Title>Feedback Manager</Title>
    <Intro>
      Use the Feedback Manager to track buyer satisfaction with your service. You can view short- and long-term metrics, as well as detailed feedback entries, including buyer e-mails and Order IDs. Click the Order ID
      <br />
      <IntroTail>to view transaction details within the Manage Orders section of Seller Central. <Link>Learn more</Link></IntroTail>
    </Intro>
    <SectionTitle>
      Feedback Rating:
      <Stars>{[0, 1, 2, 3, 4].map((n) => <StarIcon key={n} />)}</Stars>
    </SectionTitle>
    <Summary><b>0</b> stars during time selling on Amazon. (<b>0</b> ratings)</Summary>
    <Table>
      <TableRow $height={54} $columns={ratingColumns}>
        <HeadCell $indent={18} />
        {periods.map((p, i) => <HeadCell key={p} $thick={i === 1}>{p}</HeadCell>)}
      </TableRow>
      {ratings.map((r) => (
        <TableRow key={r.label} $height={r.height} $columns={ratingColumns}>
          <LabelCell>{r.label}</LabelCell>
          {periods.map((p) => <ValueCell key={p}><Percent $color={r.color}>0</Percent> %(0)</ValueCell>)}
        </TableRow>
      ))}
      <TableRow $height={53} $columns={ratingColumns}>
        <LabelCell>Count</LabelCell>
        {periods.map((p) => <ValueCell key={p}>0</ValueCell>)}
      </TableRow>
    </Table>
    <Notes>
      <span>This table displays the corresponding feedback percentages and feedback counts. <Link>See how your feedback displays to buyers on Amazon.</Link></span>
      <span>Due to rounding, the values displayed may not add up to 100%.</span>
    </Notes>
    <SectionTitle>Recent Feedback</SectionTitle>
    <Alert>
      <svg width="6" height="19" viewBox="0 0 6 19" fill={ink}><ellipse cx="3.300" cy="2.200" rx="2.400" ry="2.200" /><path d="M.5 6.500h5V19H1V8.500H.5z" /></svg>
      <span>Displaying feedback from the last 365 days. To request a feedback report: <Link>Download feedback report</Link></span>
    </Alert>
    <Tabs>
      <Tab $active $width={78}>All ratings</Tab>
      <Gap $width={30} />
      <Tab $width={93}>Positive</Tab>
      <Tab $width={89}>Neutral</Tab>
      <Tab $width={70}>Negative</Tab>
    </Tabs>
    <Pager>
      <Stroke w={8} h={12} d="M7 .7L1.500 6 7 11.300" c={ink} />
      <Stroke w={8} h={12} d="M1 .7L6.500 6 1 11.300" c={teal} />
    </Pager>
    <Table>
      <TableRow $height={53} $columns={feedbackColumns}>
        <HeadCell $indent={49}>e</HeadCell>
        <HeadCell>Rating</HeadCell>
        <HeadCell $thick>Order ID</HeadCell>
        <HeadCell>Comments</HeadCell>
        <HeadCell>Actions</HeadCell>
      </TableRow>
    </Table>
  </Content>
);

const WindowsTaskbar = () => (
  <Taskbar>
    <StartButton><WindowsIcon /></StartButton>
    <TaskSearch>
      <svg width="19" height="19" viewBox="0 0 19 19" fill="none" stroke="#dedcd9" strokeWidth="2"><circle cx="8" cy="8" r="6.900" /><path d="M13 13l5 5" strokeWidth="2.300" /></svg>
      <span>Search</span>
      <CraneArt />
    </TaskSearch>
    {taskApps.map((a, i) => (
      <Slot key={i} $active={a.active}>
        <IconBox>{a.icon}</IconBox>
        {a.running && <Indicator $active={a.active} />}
      </Slot>
    ))}
    <Tray>
      <Stroke w={14} h={9} d="M.8 8L7 1.600 13.200 8" c="#fff" s={1.900} />
      <Gap $width={23} />
      <svg width="20" height="14" viewBox="0 0 20 14">
        <path d="M4 13C-1 12-1 6 4 5.500 6-1 14-1 15 4l-4 9z" fill="#b9b7b4" /><path d="M5 3.500C8-1.500 14-.500 15 4l-4 3z" fill="#8b8986" /><path d="M3 13C1 11 5 8 8 7.500 11 4 15 3.500 16 6c3-.5 4.500 2 4 4.500-.3 1.700-1.500 2.500-3 2.500z" fill="#f4f4f3" />
      </svg>
      <Gap $width={23} />
      <svg width="14" height="20" viewBox="0 0 14 20" fill="none" stroke="#82cfea" strokeWidth="1.500"><rect x="4" y=".8" width="6" height="11.500" rx="3" /><path d="M.8 8.500c0 9 12.400 9 12.400 0M7 15.500V20" /></svg>
      <Gap $width={23} />
      <TrayText $align="center" $width={35} $ls={-0.4}>ENG<br />US</TrayText>
      <Gap $width={20} />
      <svg width="20" height="16" viewBox="0 0 20 16" fill="none" stroke="#fff" strokeWidth="1.500">
        <path d="M.7 5.300C6-.6 14-.6 19.300 5.300M3.500 8.300c4-4.200 9-4.200 13 0M6.300 11.200c2.300-2.500 5.100-2.500 7.400 0" /><circle cx="10" cy="13.500" r="1.300" fill="#fff" />
      </svg>
      <Gap $width={10} />
      <svg width="20" height="17" viewBox="0 0 20 17" fill="none" stroke="#fff" strokeWidth="1.400">
        <path d="M.8 6h3L8.500 2v13L3.800 11.200h-3zM11 5.500c1.500 1.800 1.500 4.200 0 6M13.500 3.500c2.600 3 2.600 7 0 10M16 1.500c4 4.500 4 9.500 0 14" />
      </svg>
      <Gap $width={10} />
      <svg width="20" height="17" viewBox="0 0 20 17">
        <path d="M8 4.200h7.500a2 2 0 0 1 2 2V13a2 2 0 0 1-2 2H3.200a2 2 0 0 1-2-2v-3" fill="none" stroke="#fff" strokeWidth="1.500" /><path d="M9 6.200h6.200v6.600H3.500v-2.300L7.500 9z" fill="#fff" /><path d="M18 7.500h1.300v4H18z" fill="#fff" stroke="#fff" /><path d="M4.500 0L1 6h2.500L2 11l5.500-6.500H5z" fill="#fff" />
      </svg>
      <Gap $width={10} />
      <TrayText $align="right" $width={87} $ls={-0.05}>6:45 am<br />14/02/2024</TrayText>
      <Gap $width={12} />
      <svg width="17" height="19" viewBox="0 0 17 19" fill="none" stroke="#fff" strokeWidth="1.500"><path d="M3 7a5.500 5.500 0 0 1 11 0v4.500l2 3.500H1l2-3.500zM6 15.500c.5 3 4.500 3 5 0" strokeLinejoin="round" /></svg>
    </Tray>
  </Taskbar>
);

export default function App() {
  return (
    <Screen>
      <GlobalStyle />
      <BrowserTabs />
      <BrowserToolbar />
      <Viewport>
        <LeftEdge />
        <Page>
          <SellerHeader />
          <FeedbackPage />
          <StatusEdge />
          <FeedbackTab>
            <span>FEEDBACK</span>
            <Stroke w={10} h={9} d="M.7.3l8.600 8.400M9.300.3L.7 8.700" c="#e6f4f5" s={1.500} />
          </FeedbackTab>
        </Page>
        <Scrollbar>
          <ScrollArrow />
          <ScrollThumb />
          <ScrollArrow $down />
        </Scrollbar>
      </Viewport>
      <WindowsTaskbar />
    </Screen>
  );
}
